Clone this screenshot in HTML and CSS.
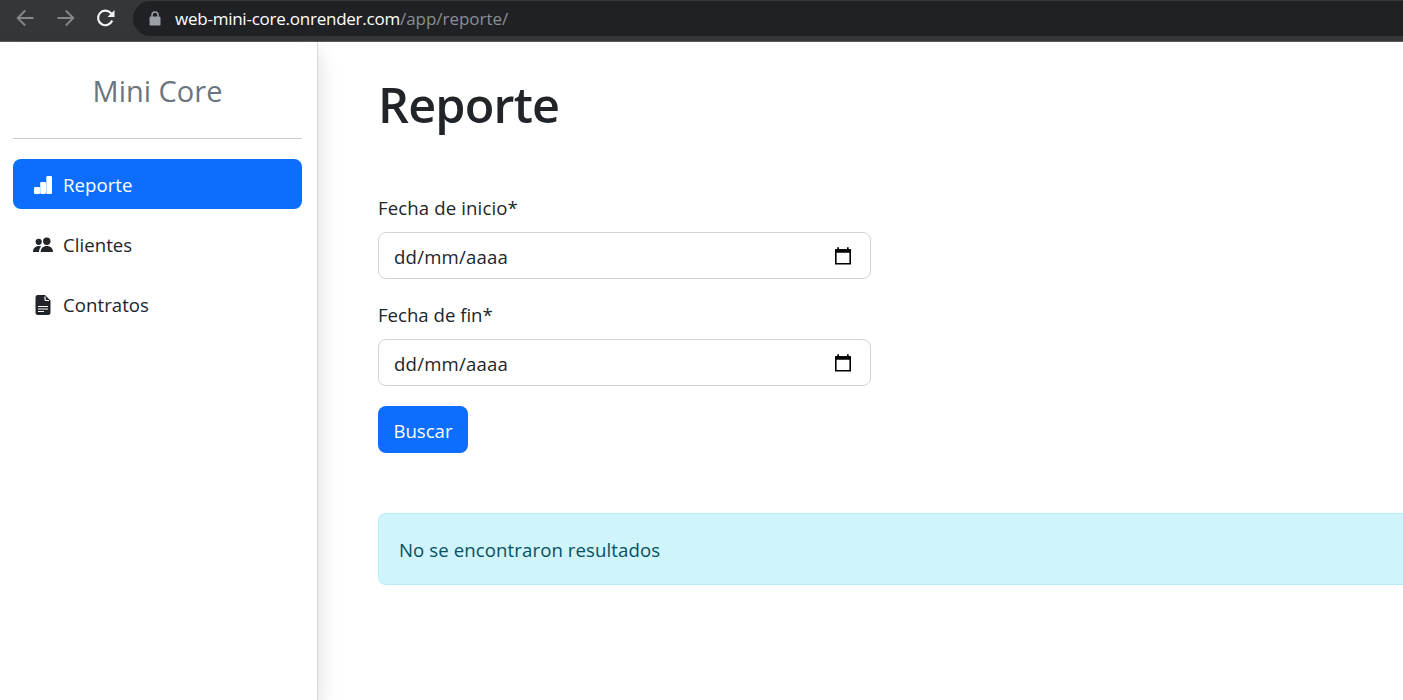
FILE: index.html
```html
<!DOCTYPE html>
<html lang="es">
<head>
<meta charset="utf-8">
<title>Mini Core</title>
<link rel="stylesheet" href="styles.css">
</head>
<body>
<header class="browser">
  <svg class="nav-icon" viewBox="0 0 20 20"><path d="M18.500 10H3M10.200 2.500 2.700 10l7.500 7.500"/></svg>
  <svg class="nav-icon" viewBox="0 0 20 20"><path d="M2.500 10h15.500M10.800 2.500 18.300 10l-7.500 7.500"/></svg>
  <svg class="nav-icon reload" viewBox="0 0 20 20"><path d="M17.200 12.500A7.300 7.300 0 1 1 15.800 5L17.500 6.700"/><path class="solid" d="M19.500 2v7h-7z"/></svg>
  <div class="address">
    <svg class="lock" viewBox="0 0 12 16"><path d="M3 6V4a3 3 0 0 1 6 0v2" fill="none" stroke="#9aa0a6" stroke-width="1.500"/><rect x=".5" y="5.500" width="11" height="9" rx="1.300" fill="#9aa0a6"/></svg>
    <span class="url"><span class="host">web-mini-core.onrender.com</span><span class="path">/app/reporte/</span></span>
  </div>
</header>
<div class="layout">
  <aside class="sidebar">
    <div class="brand"><span>Mini Core</span></div>
    <nav class="menu">
      <a class="item active">
        <svg class="icon" viewBox="0 0 20 20"><rect x="1" y="12" width="6" height="7" rx="1.300"/><rect x="7.200" y="7" width="5.800" height="12" rx="1.300"/><rect x="13.300" y="1" width="5.700" height="18" rx="1.300"/></svg>
        <span>Reporte</span>
      </a>
      <a class="item">
        <svg class="icon" viewBox="0 0 20 20"><circle cx="5.700" cy="6.800" r="3.100"/><circle cx="13.800" cy="6.300" r="3.700"/><path d="M0 17c0-3.600 2.500-6 5.800-6 1 0 1.800.2 2.500.5C6.800 12.800 6 14.800 6 17zM7.700 17c0-3.700 2.500-6 6.100-6s6.200 2.300 6.200 6z"/></svg>
        <span>Clientes</span>
      </a>
      <a class="item">
        <svg class="icon" viewBox="0 0 20 20"><path d="M4.500 0H12l5.500 5.500v12A2.500 2.500 0 0 1 15 20H5a2.500 2.500 0 0 1-2.500-2.500V2.500A2.500 2.500 0 0 1 4.500 0z"/><path d="M12 1.500v2.700c0 .8.500 1.300 1.300 1.300H16M5 11.500h10M5 14h10M5 16.500h6" fill="none" stroke="#fff" stroke-width="1.200"/></svg>
        <span>Contratos</span>
      </a>
    </nav>
  </aside>
  <main class="content">
    <h1>Reporte</h1>
    <form class="search">
      <label class="wide">Fecha de inicio*</label>
      <div class="date"><span>dd/mm/aaaa</span><svg class="calendar" viewBox="0 0 18 18"><path d="M1.800 3h14.400v13.700H1.800z" fill="none" stroke="#000" stroke-width="1.600"/><path d="M1 2.200h16v3.600H1zM3.300.3h1.700v3H3.300zM13 .3h1.700v3H13z"/></svg></div>
      <label>Fecha de fin*</label>
      <div class="date"><span>dd/mm/aaaa</span><svg class="calendar" viewBox="0 0 18 18"><path d="M1.800 3h14.400v13.700H1.800z" fill="none" stroke="#000" stroke-width="1.600"/><path d="M1 2.200h16v3.600H1zM3.300.3h1.700v3H3.300zM13 .3h1.700v3H13z"/></svg></div>
      <button type="button">Buscar</button>
    </form>
    <div class="alert"><span>No se encontraron resultados</span></div>
  </main>
</div>
</body>
</html>
```
FILE: styles.css
```css
* { box-sizing: border-box; }
body {
  margin: 0;
  height: 700px;
  overflow: hidden;
  background: #fff;
  color: #212529;
  font: 18.6px/30px "Open Sans", "Noto Sans", sans-serif;
}
.browser {
  display: flex;
  height: 42px;
  padding: 1px 0 5px 15px;
  background: #35363a;
  border-bottom: 1px solid #5a5b5f;
}
.nav-icon {
  width: 20px;
  height: 20px;
  margin: 7px 20px 0 0;
  fill: none;
  stroke: #85878a;
  stroke-width: 1.9;
}
.reload { margin-right: 18px; stroke: #f1f3f4; stroke-width: 2.1; }
.solid { fill: #f1f3f4; stroke: none; }
.address {
  flex: 1;
  display: flex;
  height: 35px;
  padding-left: 16px;
  border-radius: 18px 0 0 18px;
  background: #202124;
}
.lock { width: 12px; height: 16px; margin: 10px 14px 0 0; }
.url { font-size: 17px; line-height: 35px; color: #9aa0a6; white-space: nowrap; }
.host { color: #fff; letter-spacing: -.24px; }
.path { letter-spacing: -.03px; color: #8b8f94; }
.layout { display: flex; height: 658px; }
.sidebar {
  width: 318px;
  flex: none;
  padding: 20px 15px 0 13px;
  border-right: 1px solid #d9dadb;
  box-shadow: 0 10px 20px rgba(0, 0, 0, .15);
}
.brand {
  height: 77px;
  margin-bottom: 20px;
  border-bottom: 1px solid #c8c9ca;
  color: #6c757d;
  text-align: center;
  font-size: 29px;
  line-height: 58px;
}
.menu { display: grid; gap: 10px; }
.item {
  display: flex;
  align-items: center;
  gap: 10px;
  height: 50px;
  padding: 1px 20px 0;
  border-radius: 8px;
}
.item span { padding-top: 1px; letter-spacing: .05px; }
.active { background: #0d6efd; color: #fff; }
.icon { width: 20px; height: 20px; fill: currentColor; }
.content { flex: 1; padding: 32px 0 0 60px; }
h1 {
  margin: 0 0 59px;
  font-size: 48.5px;
  line-height: 60px;
  font-weight: 600;
  letter-spacing: -.8px;
}
.search { width: 493px; }
label { display: block; width: max-content; margin-bottom: 9px; line-height: 30px; }
.wide { letter-spacing: .12px; }
.date {
  display: flex;
  align-items: center;
  justify-content: space-between;
  height: 47px;
  margin-bottom: 21px;
  padding: 2px 18px 0 15px;
  border: 1px solid #ced4da;
  border-radius: 8px;
  letter-spacing: .2px;
}
.calendar { width: 18px; height: 18px; margin-top: -2px; }
button {
  display: block;
  width: 90px;
  height: 47px;
  margin-top: -1px;
  padding: 3px 0 0;
  border: 0;
  border-radius: 8px;
  background: #0d6efd;
  color: #fff;
  font: inherit;
}
.alert {
  height: 72px;
  margin-top: 60px;
  padding: 0 20px;
  border: 1px solid #b6effb;
  border-right: 0;
  border-radius: 8px 0 0 8px;
  background: #cff4fc;
  color: #055160;
  line-height: 72px;
  letter-spacing: .1px;
}
```
